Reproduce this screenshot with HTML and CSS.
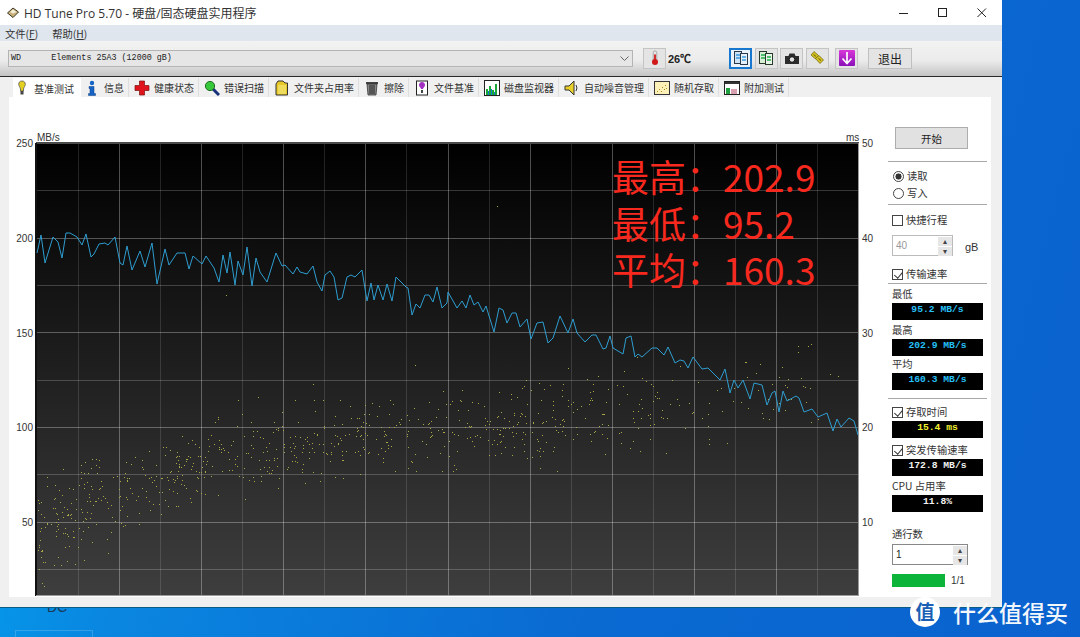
FILE: index.html
```html
<!DOCTYPE html>
<html lang="zh-CN">
<head>
<meta charset="utf-8">
<title>HD Tune Pro 5.70</title>
<link rel="stylesheet" href="styles.css">
</head>
<body>
<div class="wallpaper-label">DC</div>
<div class="shortcut"></div>
<div class="window">
  <header class="titlebar">
    <svg class="app-icon" viewBox="0 0 12 12"><path d="M6 1 11.5 5 6 10.5.5 6Z" fill="#c9b27a" stroke="#3a3222" stroke-width="1"/><path d="M6 2.5 9.5 5 6 6.5 3 5Z" fill="#f3ecd6"/></svg>
    <span class="title-text">HD Tune Pro 5.70 - 硬盘/固态硬盘实用程序</span>
    <div class="win-controls">
      <svg viewBox="0 0 10 10"><path d="M0 5.5H9" stroke="#222" fill="none"/></svg>
      <svg viewBox="0 0 10 10"><rect x=".5" y=".5" width="8" height="8" stroke="#222" fill="none"/></svg>
      <svg viewBox="0 0 10 10"><path d="M.5.5 9 9M9 .5.5 9" stroke="#222" fill="none"/></svg>
    </div>
  </header>
  <nav class="menubar"><span>文件(<u>F</u>)</span><span>帮助(<u>H</u>)</span></nav>
  <div class="toolbar">
    <div class="combo"><span class="combo-text">WD      Elements 25A3 (12000 gB)</span>
      <svg class="chevron" viewBox="0 0 9 5"><path d="M.5.5 4.5 4.5 8.5.5" fill="none" stroke="#666"/></svg></div>
    <button class="tool tool-temp"><svg viewBox="0 0 16 18"><rect x="6" y="1" width="4" height="12" rx="2" fill="#e6e6e6" stroke="#777" stroke-width=".6"/><rect x="7" y="5" width="2" height="8" fill="#d01818"/><circle cx="8" cy="13.5" r="3.4" fill="#d01818"/></svg></button>
    <span class="temp">26℃</span>
    <button class="tool tool-on"><svg viewBox="0 0 16 16"><rect x="1.500" y="1.500" width="7" height="12" fill="#cfe3f5" stroke="#2a3a4a"/><rect x="7.500" y="3.500" width="7" height="11" fill="#e6f0f8" stroke="#2a3a4a"/><path d="M3 5H7M3 8H7M9 7H13M9 10H13" stroke="#3a9ae0" stroke-width="1.500"/></svg></button>
    <button class="tool"><svg viewBox="0 0 16 16"><rect x="1.500" y="1.500" width="7" height="12" fill="#d8efd8" stroke="#2a3a2a"/><rect x="7.500" y="3.500" width="7" height="11" fill="#e8f4e8" stroke="#2a3a2a"/><path d="M3 5H7M3 8H7M9 7H13M9 10H13" stroke="#22b04a" stroke-width="1.500"/></svg></button>
    <button class="tool"><svg viewBox="0 0 16 16"><path d="M1 6H4.500L5.500 3.500H10.500L11.500 6H15V14H1Z" fill="#2c2c2c"/><circle cx="8" cy="9.500" r="2.800" fill="#e0e0e0" stroke="#111"/></svg></button>
    <button class="tool"><svg viewBox="0 0 16 16"><path d="M2 5 5 1.500 9.500 5.500 6.500 9Z" fill="#d2c020" stroke="#7a7018" stroke-width=".8"/><path d="M6.500 8.500 10 5.500 14.500 10 11 13.500Z" fill="#d2c020" stroke="#7a7018" stroke-width=".8"/><path d="M4.500 4.500 7 6.500M9.500 8.500 12 10.500" stroke="#6a6010"/></svg></button>
    <button class="tool tool-last"><svg viewBox="0 0 16 16"><defs><linearGradient id="pur" x1="0" y1="0" x2="0" y2="1"><stop offset="0" stop-color="#d838d8"/><stop offset="1" stop-color="#8a10b8"/></linearGradient></defs><rect width="16" height="16" rx="1" fill="url(#pur)"/><path d="M8 2V13M3.500 8.500 8 13.500 12.500 8.500" fill="none" stroke="#fff" stroke-width="1.700"/></svg></button>
    <button class="exit">退出</button>
  </div>
  <div class="tabs">
    <div class="tab tab-active"><svg viewBox="0 0 16 16"><path d="M8 1C6 1 4.700 2.300 4.700 4.300 4.700 6 6.200 7.200 6.500 9V11H9.500V9C9.800 7.200 11.300 6 11.300 4.300 11.300 2.300 10 1 8 1Z" fill="#e4d020" stroke="#555" stroke-width=".8"/><rect x="6.500" y="11" width="3" height="3.500" fill="#444"/></svg>基准测试</div>
    <div class="tab tab-second"><svg viewBox="0 0 16 16"><circle cx="8" cy="3" r="2.200" fill="#1464c8"/><path d="M5 6.500H10V13.500H11.500V15.500H4.500V13.500H6V8.500H5Z" fill="#1464c8" stroke="#0c3c80" stroke-width=".5"/></svg>信息</div>
    <div class="tab"><svg viewBox="0 0 16 16"><path d="M5.500 1H10.500V5.500H15V10.500H10.500V15H5.500V10.500H1V5.500H5.500Z" fill="#e0141c" stroke="#7c1010" stroke-width=".7"/></svg>健康状态</div>
    <div class="tab"><svg viewBox="0 0 16 16"><path d="M9 9 15 15" stroke="#16307c" stroke-width="3"/><circle cx="6" cy="6" r="4.600" fill="#38c83c" stroke="#1c6a20"/></svg>错误扫描</div>
    <div class="tab"><svg viewBox="0 0 16 16"><path d="M2 4 4 1H9L11 3H13.500V15H2Z" fill="#e8c828" stroke="#333"/><rect x="4" y="5" width="8" height="9" fill="#f0dc5c"/></svg>文件夹占用率</div>
    <div class="tab"><svg viewBox="0 0 16 16"><path d="M2 2H14V4H2Z" fill="#444"/><path d="M3 4H13L12 15H4Z" fill="#888" stroke="#222" stroke-width=".7"/><path d="M6 5V14M8 5V14M10 5V14" stroke="#222"/></svg>擦除</div>
    <div class="tab"><svg viewBox="0 0 16 16"><rect x="2.500" y="1" width="11" height="14" fill="#fff" stroke="#222"/><path d="M8 2C6 2 5 3.500 5 5 5 7 7 7.500 7 9H9C9 7.500 11 7 11 5 11 3.500 10 2 8 2Z" fill="#a030c0"/><rect x="7" y="10" width="2" height="3" fill="#444"/></svg>文件基准</div>
    <div class="tab"><svg viewBox="0 0 16 16"><rect x=".5" y=".5" width="15" height="15" fill="#fff" stroke="#222"/><path d="M2 15V9H4V15ZM5 15V6H7V15ZM8 15V10H10V15ZM11 15V4H13V15Z" fill="#18a838"/><path d="M4 15V11H5V15ZM7 15V9H8V15ZM10 15V12H11V15Z" fill="#1878d0"/></svg>磁盘监视器</div>
    <div class="tab"><svg viewBox="0 0 16 16"><path d="M1 6H5L10 1V15L5 10H1Z" fill="#e8d028" stroke="#333"/><path d="M12 5Q14 8 12 11" fill="none" stroke="#333"/></svg>自动噪音管理</div>
    <div class="tab"><svg viewBox="0 0 16 16"><rect x=".5" y="1.500" width="15" height="13" fill="#fbf0b8" stroke="#333"/><path d="M3 11h1v1H3zM5 9h1v1H5zM7 11h1v1H7zM8 7h1v1H8zM10 9h1v1h-1zM11 5h1v1h-1zM12 8h1v1h-1z" fill="#b09018"/></svg>随机存取</div>
    <div class="tab"><svg viewBox="0 0 16 16"><rect x=".5" y="1.500" width="15" height="13" fill="#fff" stroke="#222"/><rect x="1" y="2" width="14" height="2" fill="#333"/><rect x="2" y="8" width="4" height="6" fill="#20a040"/><rect x="7" y="9" width="6" height="5" fill="#d8a0b0"/></svg>附加测试</div>
  </div>
  <main class="panel">
    <svg class="chart" viewBox="9 97 879 500">
      <defs><linearGradient id="plot-bg" x1="0" y1="0" x2="0" y2="1"><stop offset="0" stop-color="#000"/><stop offset="1" stop-color="#3e3e3e"/></linearGradient></defs>
      <rect x="37" y="144" width="821" height="451" fill="url(#plot-bg)"/>
      <g id="grid"></g>
      <path d="M36 143H859" class="edge-top"/><path d="M36 143V596" class="edge-left"/>
      <path d="M36 595.500H859M858.500 143V596" class="edge-light"/>
      <g id="dots"></g>
      <polyline class="trace" points="37,253 41,235 45,263 53,237 58,242 62,258 66,233 70,233 77,237 82,245 86,234 91,257 94,254 99,244 105,243 108,245 115,237 120,263 123,265 127,246 132,270 140,251 145,267 152,243 157,284 165,249 169,265 177,253 185,253 189,269 193,256 202,264 206,256 214,268 219,282 223,255 227,273 230,252 235,285 238,261 243,275 247,247 252,286 256,258 260,272 267,282 276,253 282,266 285,265 293,274 297,267 300,272 307,274 313,266 317,282 322,291 325,275 330,271 334,277 338,300 342,298 347,277 351,275 355,277 362,270 367,301 371,283 374,300 378,285 383,300 387,284 392,301 396,277 406,287 408,288 412,315 416,304 420,308 425,295 429,295 433,302 437,287 442,308 447,303 448,292 457,308 462,301 466,308 470,295 474,305 478,302 483,312 486,306 494,332 499,308 503,310 507,323 512,313 516,313 520,327 527,319 531,339 537,323 543,322 548,343 553,338 560,316 568,333 573,319 577,333 585,342 592,335 596,335 600,343 603,349 606,348 610,336 613,348 623,354 626,338 631,336 635,357 638,354 642,357 652,348 657,348 664,355 668,347 675,363 680,360 684,361 688,368 693,357 702,369 708,368 720,380 725,369 730,393 734,380 738,388 743,380 750,399 754,383 762,385 767,405 772,393 775,391 779,412 783,391 787,401 796,396 799,398 804,412 812,409 818,417 827,413 833,431 837,419 841,427 849,418 854,421 858,435"/>
      <text class="axis" x="37" y="141">MB/s</text>
      <text class="axis" x="846" y="141">ms</text>
      <text class="axis end" x="33" y="147">250</text>
      <text class="axis end" x="33" y="242">200</text>
      <text class="axis end" x="33" y="337">150</text>
      <text class="axis end" x="33" y="431">100</text>
      <text class="axis end" x="33" y="526">50</text>
      <text class="axis" x="862" y="147">50</text>
      <text class="axis" x="862" y="242">40</text>
      <text class="axis" x="862" y="337">30</text>
      <text class="axis" x="862" y="431">20</text>
      <text class="axis" x="862" y="526">10</text>
      <text class="big" x="612" y="192">最高：202.9</text>
      <text class="big" x="612" y="239">最低：95.2</text>
      <text class="big" x="612" y="285">平均：160.3</text>
    </svg>
    <aside class="side">
      <button class="start">开始</button>
      <hr class="sep mt-12">
      <label class="row mt-7"><i class="radio radio-on"></i>读取</label>
      <label class="row mt-3"><i class="radio"></i>写入</label>
      <hr class="sep mt-4">
      <label class="row mt-8"><i class="check"></i>快捷行程</label>
      <div class="spin-row mt-8">
        <div class="spin spin-off"><span>40</span><div class="spin-btns"><b>▴</b><b>▾</b></div></div>
        <span class="unit">gB</span>
      </div>
      <label class="row mt-11"><i class="check check-on"></i>传输速率</label>
      <hr class="sep mt-2">
      <div class="row mt-3">最低</div>
      <div class="readout blue mt-2">95.2 MB/s</div>
      <div class="row mt-3">最高</div>
      <div class="readout blue mt-2">202.9 MB/s</div>
      <div class="row mt-1">平均</div>
      <div class="readout blue mt-2">160.3 MB/s</div>
      <hr class="sep mt-8">
      <label class="row mt-6"><i class="check check-on"></i>存取时间</label>
      <div class="readout yellow mt-2">15.4 ms</div>
      <label class="row mt-5"><i class="check check-on"></i>突发传输速率</label>
      <div class="readout white mt-2">172.8 MB/s</div>
      <div class="row mt-3">CPU 占用率</div>
      <div class="readout white mt-2">11.8%</div>
      <div class="row mt-15">通行数</div>
      <div class="spin spin-wide mt-3"><span>1</span><div class="spin-btns"><b>▴</b><b>▾</b></div></div>
      <div class="progress mt-9"><div class="bar"></div><span>1/1</span></div>
    </aside>
  </main>
</div>
<div class="watermark">
  <div class="wm-logo">值</div>
  <div class="wm-text">什么值得买</div>
</div>
<script src="app.js"></script>
</body>
</html>
```
FILE: styles.css
```css
* { box-sizing: border-box; }
html, body { margin: 0; height: 100%; }
body {
  width: 1080px; height: 637px; overflow: hidden; position: relative;
  background: linear-gradient(105deg, #00a9f2 0%, #0a86e0 22%, #0a6ad2 60%, #0a62ce 100%);
  font-family: "Noto Sans CJK SC", "Noto Sans", sans-serif;
  font-size: 10px; color: #333;
}
.window {
  width: 1002px; height: 607px; background: #f0f0f0; position: relative;
  display: flex; flex-direction: column;
  box-shadow: 0 1px 0 #0a5c88;
}
.titlebar { height: 25px; background: #fff; display: flex; align-items: center; padding-left: 7px; }
.app-icon { width: 12px; height: 12px; margin-right: 5px; }
.title-text { font-family: "Open Sans", "Noto Sans CJK SC", sans-serif; font-size: 12px; color: #333; }
.win-controls { margin-left: auto; display: flex; gap: 29px; padding-right: 15px; }
.win-controls svg { width: 10px; height: 10px; }
.menubar { height: 16px; background: #dfe6ee; display: flex; align-items: center; gap: 14px; padding-left: 5px; font-size: 10.300px; color: #333; }
.toolbar {
  height: 36px; display: flex; align-items: center; padding-left: 8px; padding-bottom: 1px;
  background: linear-gradient(#f2f2f2 0, #ececec 55%, #c4c4c4 100%);
  border-bottom: 1px solid #2a2a2a;
}
.combo { width: 625px; height: 17px; background: #e6e6e6; border: 1px solid #b4b4b4; display: flex; align-items: center; padding: 0 3px 0 2px; }
.combo-text { font-family: "Liberation Mono", monospace; font-size: 8.400px; color: #222; white-space: pre; }
.chevron { width: 9px; height: 5px; margin-left: auto; }
.tool { width: 23px; height: 21px; padding: 0; margin-right: 2.500px; background: #e4e4e4; border: 1px solid #c4c4c4; display: flex; align-items: center; justify-content: center; }
.tool svg { width: 16px; height: 16px; }
.tool-temp { margin-left: 10px; margin-right: 2px; }
.temp { width: 61px; font-family: "Liberation Sans", sans-serif; font-weight: bold; font-size: 11px; color: #222; }
.tool-on { border: 2px solid #1878d0; background: #eaf3fb; }
.tool-last { margin-left: 4px; margin-right: 10px; }
.exit { width: 44px; height: 21px; padding: 0; background: #e4e4e4; border: 1px solid #c0c0c0; font: 12px "Noto Sans CJK SC", sans-serif; color: #222; }
.tabs { height: 20px; display: flex; padding-left: 13px; align-items: flex-end; }
.tab {
  height: 19px; padding: 0 4px 0 5px; display: flex; align-items: center; gap: 4px;
  background: #f0f0f0; border-right: 1px solid #dedede;
  font-size: 10px; color: #333; white-space: nowrap;
}
.tab svg { width: 16px; height: 16px; flex: none; }
.tab-active { height: 20px; padding: 0 7px 0 1px; background: #fff; position: relative; top: 1px; border-right: 0; }
.tab-second { padding-left: 3px; }
.panel { width: 982px; height: 500px; margin-left: 9px; background: #fff; display: flex; border: 0; }
.chart { width: 879px; height: 500px; flex: none; }
.edge-top { stroke: #4a4a4a; stroke-width: 2; fill: none; }
.edge-left { stroke: #111; stroke-width: 2; fill: none; }
.edge-light { stroke: #9a9a9a; fill: none; }
.trace { fill: none; stroke: #2e9dd0; stroke-width: 1; stroke-linejoin: miter; }
.axis { font: 10px "Liberation Sans", sans-serif; fill: #333; }
.end { text-anchor: end; }
.big { font: 37px "Noto Sans CJK SC", sans-serif; fill: #f7291e; }
.side { width: 99px; display: flex; flex-direction: column; align-items: flex-start; padding-top: 30px; }
.start { width: 73px; height: 22px; margin-left: 7px; padding: 0; background: #e1e1e1; border: 1px solid #adadad; font: 10.500px "Noto Sans CJK SC", sans-serif; color: #222; flex: none; }
.sep { width: 99px; height: 1px; border: 0; margin-bottom: 0; margin-left: 0; margin-right: 0; background: #a8a8a8; flex: none; }
.row { height: 14px; display: flex; align-items: center; gap: 3px; margin-left: 4px; font-size: 10.300px; line-height: 14px; color: #333; white-space: nowrap; flex: none; }
.radio { width: 11px; height: 11px; margin-left: 1px; border: 1px solid #444; border-radius: 50%; background: #fff; display: block; position: relative; }
.radio-on { background: radial-gradient(circle, #333 0 2.800px, #fff 3.300px); }
.check { width: 11px; height: 11px; border: 1px solid #444; background: #fff; display: block; }
.check-on { position: relative; }
.check-on::after { content: ""; position: absolute; left: 2.500px; top: 0; width: 3.500px; height: 7px; border: solid #333; border-width: 0 1px 1px 0; transform: rotate(40deg); }
.spin-row { display: flex; align-items: center; margin-left: 4px; flex: none; }
.spin { width: 61px; height: 21px; border: 1px solid #bbb; background: #fff; display: flex; align-items: center; justify-content: space-between; padding: 1px 0 1px 3px; font: 10px "Liberation Sans", sans-serif; flex: none; }
.spin-off { color: #999; }
.spin-wide { width: 76px; margin-left: 4px; border-color: #888; color: #222; }
.spin-btns { width: 14px; height: 100%; display: flex; flex-direction: column; gap: 1px; }
.spin-btns b { flex: 1; background: #e6e6e6; font: 8px/9px "DejaVu Sans", sans-serif; text-align: center; color: #444; }
.unit { margin-left: 12px; margin-top: 2px; font: 11px "Liberation Sans", sans-serif; color: #333; }
.readout { width: 91px; height: 17px; margin-left: 4px; background: #000; font: bold 9.700px/14px "Liberation Mono", monospace; text-align: center; flex: none; }
.blue { color: #25c0f8; }
.yellow { color: #f0f030; }
.white { color: #f2f2f2; }
.progress { display: flex; align-items: center; gap: 6px; margin-left: 4px; font: 10px "Liberation Sans", sans-serif; flex: none; }
.bar { width: 53px; height: 13px; background: #0cb43a; }
.mt-1 { margin-top: 1px; } .mt-2 { margin-top: 2px; } .mt-3 { margin-top: 3px; } .mt-4 { margin-top: 4px; }
.mt-5 { margin-top: 5px; } .mt-6 { margin-top: 6px; } .mt-7 { margin-top: 7px; } .mt-8 { margin-top: 8px; }
.mt-9 { margin-top: 9px; } .mt-11 { margin-top: 11px; } .mt-12 { margin-top: 12px; } .mt-15 { margin-top: 15px; }
.wallpaper-label { position: absolute; left: 47px; top: 601px; font: 14px/13px "Liberation Sans", sans-serif; color: #1a3a5a; }
.shortcut { position: absolute; left: 15px; top: 630px; width: 78px; height: 7px; border: 1px solid rgba(255,255,255,.18); border-bottom: 0; }
.watermark { position: absolute; left: 910px; top: 597px; display: flex; align-items: center; gap: 13px; }
.wm-logo { width: 30px; height: 30px; border-radius: 50%; background: #fff; color: #1a5fb4; font-size: 19px; font-weight: 700; line-height: 28px; text-align: center; }
.wm-text { color: #fff; font-size: 23px; line-height: 28px; font-weight: 500; white-space: nowrap; opacity: .95; }
```
FILE: app.js
```js
(function () {
  var NS = "http://www.w3.org/2000/svg";
  var grid = document.getElementById("grid");
  var dots = document.getElementById("dots");
  function line(x1, y1, x2, y2, op) {
    var l = document.createElementNS(NS, "line");
    l.setAttribute("x1", x1); l.setAttribute("y1", y1);
    l.setAttribute("x2", x2); l.setAttribute("y2", y2);
    l.setAttribute("stroke", "#fff"); l.setAttribute("stroke-opacity", op);
    grid.appendChild(l);
  }
  var i;
  for (i = 1; i < 20; i++) {
    var x = Math.round(37 + i * 41.05) + 0.5;
    line(x, 144, x, 595, i % 2 ? 0.13 : 0.3);
  }
  for (i = 1; i < 10; i++) {
    var y = Math.round(143 + i * 47.35) + 0.5;
    line(37, y, 858, y, i % 2 ? 0.2 : 0.3);
  }
  var seed = 20240;
  function rnd() { seed = (seed * 1664525 + 1013904223) % 4294967296; return seed / 4294967296; }
  function gauss() { return (rnd() + rnd() + rnd() + rnd() - 2) / 0.58; }
  function dot(px, py) {
    var d = document.createElementNS(NS, "rect");
    d.setAttribute("x", Math.round(px)); d.setAttribute("y", Math.round(py));
    d.setAttribute("width", 1); d.setAttribute("height", 1);
    d.setAttribute("fill", "#a9a848");
    dots.appendChild(d);
  }
  for (i = 0; i < 860; i++) {
    var t = Math.pow(rnd(), 1.25);
    var px = 38 + t * 780;
    if (px > 660 && rnd() < 0.6) continue;
    var center = px < 240 ? 528 - (px - 38) * 0.38 : 451 - (px - 240) * 0.1;
    var spread = px < 120 ? 26 : 20;
    var py = center + gauss() * spread;
    if (py < 592 && py > 300) dot(px, py);
  }
  [[497, 206], [226, 295], [313, 384], [522, 388], [415, 365], [808, 346], [798, 352], [811, 344], [760, 364], [830, 374], [838, 376], [745, 362], [698, 382], [680, 366]].forEach(function (p) { dot(p[0], p[1]); });
})();
```
